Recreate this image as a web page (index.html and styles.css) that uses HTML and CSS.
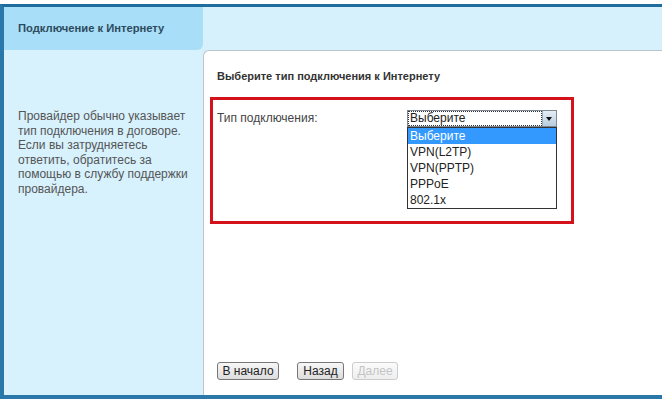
FILE: index.html
```html
<!DOCTYPE html>
<html lang="ru">
<head>
    <meta charset="UTF-8">
    <title>Подключение к Интернету</title>
    <link rel="stylesheet" href="styles.css">
</head>
<body>
<div class="frame">
    <div class="tab">Подключение к Интернету</div>
    <div class="topbar"></div>
    <div class="side">
        <p>Провайдер обычно указывает тип подключения в договоре. Если вы затрудняетесь ответить, обратитесь за помощью в службу поддержки провайдера.</p>
    </div>
    <div class="content">
        <h2>Выберите тип подключения к Интернету</h2>
        <div class="highlight">
            <span class="label">Тип подключения:</span>
            <div class="select">
                <span class="value"><span class="focus">Выберите</span></span>
                <span class="arrow"></span>
                <ul class="options">
                    <li class="active">Выберите</li>
                    <li>VPN(L2TP)</li>
                    <li>VPN(PPTP)</li>
                    <li>PPPoE</li>
                    <li>802.1x</li>
                </ul>
            </div>
        </div>
        <div class="buttons">
            <button class="btn btn-start">В начало</button>
            <button class="btn btn-back">Назад</button>
            <button class="btn" disabled>Далее</button>
        </div>
    </div>
</div>
</body>
</html>
```

FILE: styles.css
```css
body { margin: 0; background: #fff; font-family: "Liberation Sans", Arial, sans-serif; color: #333; }

.frame {
    margin-top: 4px;
    width: 658px;
    height: 388px;
    border-top: 3px solid #1f6c9f;
    border-left: 4px solid #2a78aa;
    border-bottom: 4px solid #2a78aa;
    background: #d6f0fc;
    display: grid;
    grid-template-columns: 199px 1fr;
    grid-template-rows: 43px 1fr;
}

.tab {
    background: #a8def7;
    border-bottom-right-radius: 6px;
    padding-left: 14px;
    font-size: 11.2px;
    font-weight: bold;
    color: #2c4b5e;
    display: flex;
    align-items: center;
    padding-bottom: 2px;
}
.topbar { background: #d6f0fc; }

.side { background: #d7f1fd; padding: 59px 0 0 14px; }
.side p { margin: 0; max-width: 172px; font-size: 12px; line-height: 14.6px; color: #555; }

.content {
    background: #fff;
    border-top: 1px solid #b9c6cd;
    border-left: 1px solid #b9c6cd;
    border-top-left-radius: 6px;
    display: flex;
    flex-direction: column;
}
.content h2 { margin: 18px 0 0 13px; font-size: 11px; line-height: 14px; color: #333; }

.highlight {
    margin: 14px 0 0 6px;
    width: 364px;
    height: 127px;
    box-sizing: border-box;
    border: 3px solid #d5121b;
    padding: 10px 0 0 4px;
    display: flex;
    align-items: flex-start;
}
.label { width: 190px; font-size: 12px; line-height: 17px; color: #444; }

.select {
    position: relative;
    width: 150px;
    height: 17px;
    box-sizing: border-box;
    border: 1px solid #7d8a96;
    display: flex;
    font-size: 12px;
}
.value { flex: 1; padding: 1px; }
.focus { display: block; height: 13px; line-height: 13px; outline: 1px dotted #333; padding-left: 1px; color: #222; }
.arrow {
    width: 13px;
    border-left: 1px solid #9aabb9;
    background: linear-gradient(#e4eef6, #b9cddd);
    position: relative;
}
.arrow::after {
    content: "";
    position: absolute;
    left: 3px;
    top: 6px;
    border-left: 3px solid transparent;
    border-right: 3px solid transparent;
    border-top: 4px solid #111;
}

.options {
    position: absolute;
    top: 16px;
    left: -1px;
    width: 150px;
    box-sizing: border-box;
    margin: 0;
    padding: 0;
    list-style: none;
    background: #fff;
    border: 1px solid #333;
}
.options li { height: 16px; line-height: 16px; padding-left: 2px; color: #222; }
.options li.active { background: #3399ff; color: #fff; }

.buttons { margin-top: auto; padding: 0 0 15px 13px; display: flex; }
.btn {
    height: 18px;
    padding: 0;
    white-space: nowrap;
    font-family: "Liberation Sans", Arial, sans-serif;
    font-size: 12px;
    color: #222;
    border: 1px solid #777;
    border-radius: 3px;
    background: linear-gradient(#f7f7f7, #dcdcdc);
}
.btn-start { width: 62px; margin-right: 18px; }
.btn-back { width: 47px; margin-right: 8px; }
.btn:disabled { width: 46px; color: #c4c4c4; border-color: #ccc; background: linear-gradient(#fbfbfb, #eeeeee); }
```
